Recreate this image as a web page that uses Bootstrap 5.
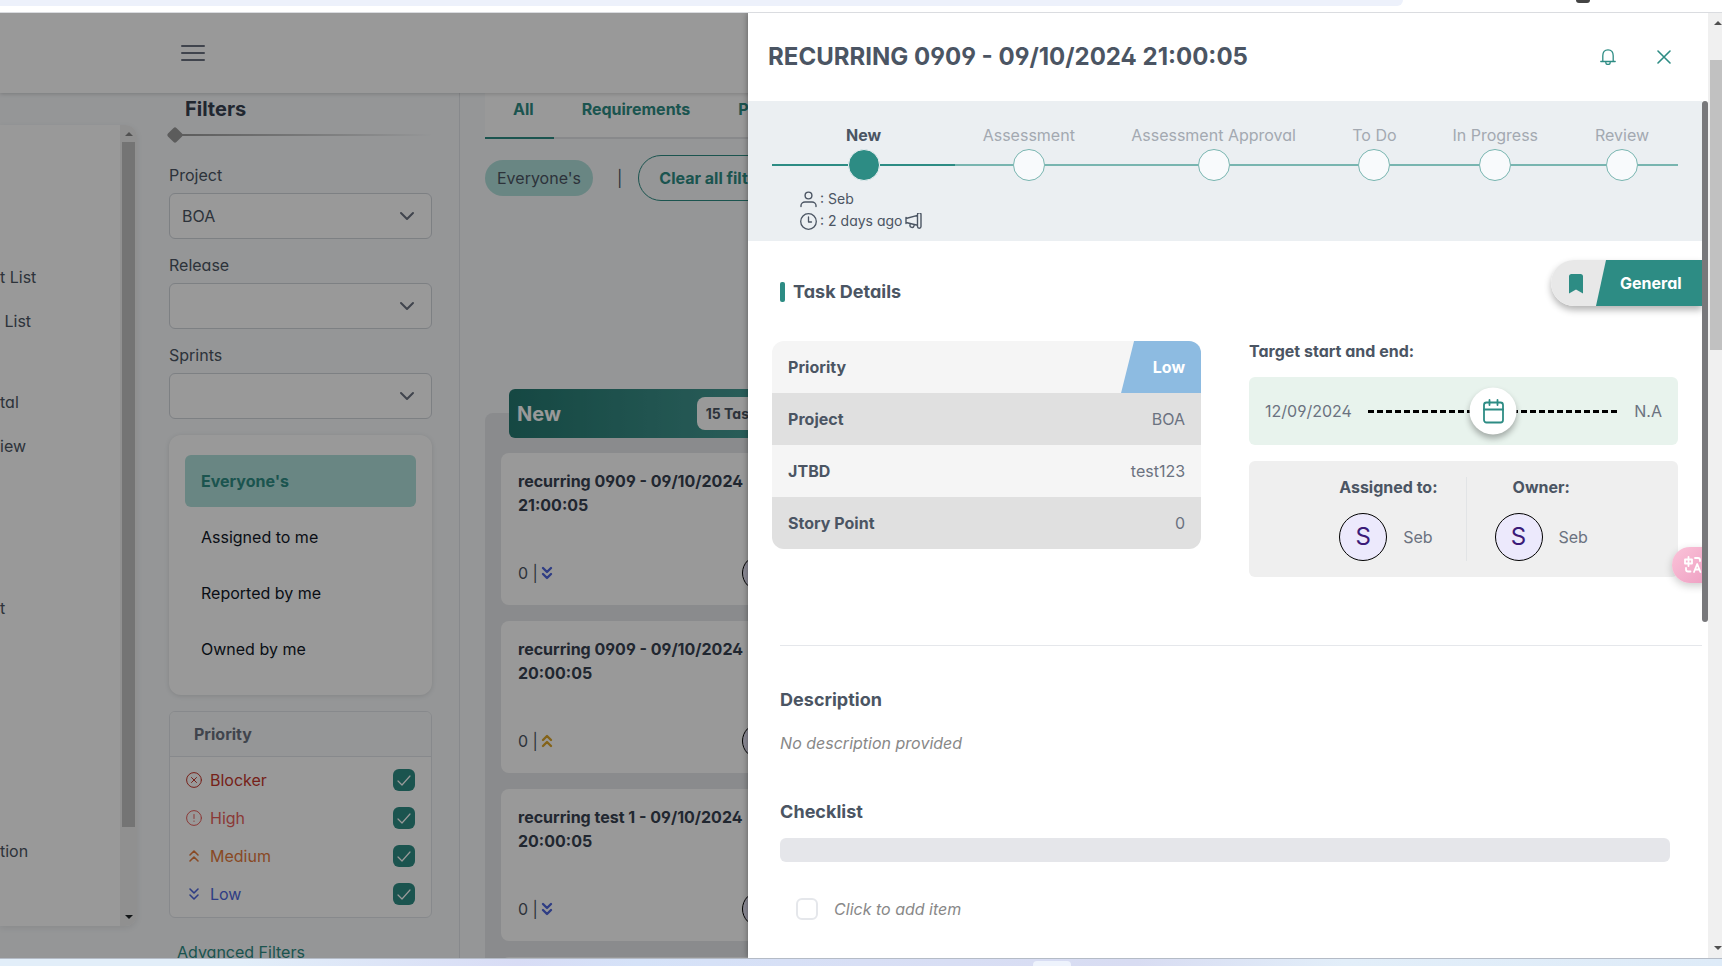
<!DOCTYPE html>
<html lang="en">
<head>
<meta charset="utf-8">
<meta name="viewport" content="width=device-width, initial-scale=1">
<title>Recurring 0909</title>
<link rel="stylesheet" href="https://cdn.jsdelivr.net/npm/bootstrap@5.3.0/dist/css/bootstrap.min.css">
<style>
:root { --teal:#2d8c84; --ink:#4b5563; --ink-soft:#6b7280; --edge:#d1d5db; }
body { font-family:Inter,"Noto Sans",sans-serif; font-feature-settings:"cv02","cv03","cv04","cv11"; font-size:16px; line-height:24px; color:var(--ink); background:#fff; }
a { text-decoration:none; color:inherit; }
svg { display:block; flex:none; fill:none; stroke:currentColor; stroke-linecap:round; stroke-linejoin:round; }

/* browser edges */
.chrome-top { flex:none; height:13px; border-bottom:1px solid #dadce0; }
.omnibox { width:81.5%; height:6px; background:#edf1fb; border-bottom-right-radius:16px; }
.chrome-icon { width:14px; height:3px; background:#444; border-radius:0 0 4px 4px; margin-left:173px; }
.chrome-bottom { flex:none; height:8px; border-top:1px solid #b4bbc6; background:linear-gradient(90deg,#e2eef9 0%,#e2eef9 14%,#d8dcf5 30%,#d5e2f8 37%,#d8dff5 50%,#d8dcf2 66%,#e2eef9 78%,#deebf8 100%); }
.taskbar-chip { width:38px; height:5px; background:#eef3fc; border-radius:4px 4px 0 0; margin-left:60%; }

/* page scrollbar */
.page-scroll { width:14px; background:#f0f0f0; padding:8px 0 8px 2px; color:#505050; }
.page-scroll .thumb { height:290px; background:#c1c1c1; margin-top:35px; }
.arrow { flex:none; width:0; height:0; border:4px solid transparent; border-top:0; border-bottom:4px solid currentColor; }
.arrow.down { border-top:4px solid currentColor; border-bottom:0; }

/* application page */
.app-page { background:#f8fafc; }
.app-bar { height:80px; background:#fff; padding-left:181px; box-shadow:0 1px 4px rgba(0,0,0,.18); z-index:1; }
.app-bar .btn { color:var(--ink-soft); }
.side-nav { width:137px; height:801px; margin-top:32px; background:#fff; border-radius:0 12px 12px 0; box-shadow:0 2px 6px rgba(0,0,0,.08); overflow:hidden; }
.side-nav a { display:block; height:44px; line-height:44px; white-space:pre; }
.side-nav .links { padding-top:130px; }
.side-nav .track { width:17px; background:#f0f0f0; color:#888; padding:7px 0; }
.side-nav .thumb { width:13px; height:685px; background:#c1c1c1; margin-top:6px; }
.sp-1 { margin-top:37px; } .sp-2 { margin-top:118px; } .sp-3 { margin-top:199px; }
.filters { width:323px; padding:0 27px 0 32px; border-right:1px solid #e2e5e9; }
.filters h2 { font-size:20px; line-height:32px; font-weight:700; color:#374151; margin:0 0 0 16px; }
.rule { height:16px; margin:2px 0 20px; }
.rule i { width:12px; height:12px; border-radius:2px; background:#9a9a9a; transform:rotate(45deg); }
.rule span { height:2px; background:linear-gradient(90deg,#9a9a9a,#f8fafc); }
.filters .form-label { display:block; margin:0 0 6px; }
.filters .form-select { height:46px; border:1px solid var(--edge); border-radius:6px; padding:0 12px; color:var(--ink); margin-bottom:14px; background:#fff url("data:image/svg+xml,%3Csvg xmlns='http://www.w3.org/2000/svg' viewBox='0 0 16 10'%3E%3Cpath d='M2 2l6 6 6-6' fill='none' stroke='%236b7280' stroke-width='2' stroke-linecap='round' stroke-linejoin='round'/%3E%3C/svg%3E") no-repeat right 16px center/16px 10px; }
.people { background:#fff; border-radius:12px; padding:20px 16px; height:260px; margin-top:16px; box-shadow:0 1px 5px rgba(0,0,0,.12); }
.people button { height:52px; border:0; border-radius:6px; padding:0 16px; text-align:left; background:none; color:#111827; }
.people button.on { background:#b0dfda; color:var(--teal); font-weight:700; }
.prio { border:1px solid #e2e5ea; border-radius:6px; margin-top:16px; overflow:hidden; background:#fff; }
.prio h3 { font-size:16px; line-height:44px; font-weight:700; color:var(--ink-soft); margin:0; padding-left:24px; background:#f8fafc; border-bottom:1px solid #e2e5ea; }
.prio label { height:38px; padding:0 16px; }
.prio .form-check-input { width:22px; height:22px; border-radius:6px; margin:0; border:0; background:var(--teal) url("data:image/svg+xml,%3Csvg xmlns='http://www.w3.org/2000/svg' viewBox='0 0 22 22'%3E%3Cpath d='M5 12l4 4 8-9' fill='none' stroke='%23fff' stroke-width='1.2' stroke-linecap='round' stroke-linejoin='round'/%3E%3C/svg%3E") center/22px 22px no-repeat; }
.p-blocker { color:#c5372c; } .p-high { color:#e85f5c; } .p-medium { color:#e57a3c; } .p-low { color:#4f67dd; } .p-mid { color:#dca62a; }
.adv { color:var(--teal); margin:22px 0 0 8px; }

.board { padding-left:25px; min-width:0; }
.tabs { height:46px; background:#fff; border-bottom:2px solid #e3e5e8; font-weight:700; color:var(--teal); }
.tabs a { height:46px; padding:4px 20px 0 28px; border-bottom:2px solid transparent; }
.tabs a.on { border-color:var(--teal); }
.chips { margin-top:16px; }
.chip-tag { background:#b0dfda; border-radius:18px; height:36px; line-height:36px; padding:0 12px; }
.clear-btn { height:46px; border:1px solid var(--teal); border-radius:23px; background:none; color:var(--teal); font-weight:700; padding:0 20px; }
.lane { display:flow-root; width:326px; background:#e6e8eb; border-radius:8px; margin-top:212px; padding:0 16px; height:600px; }
.lane-head { height:49px; margin:-24px 8px 15px; background:linear-gradient(90deg,#247870,#4aa09a); border-radius:6px; padding:0 13px 0 8px; color:#fff; font-size:20px; font-weight:700; }
.lane-head span { height:33px; line-height:33px; border-radius:8px; background:#fff; color:var(--ink); font-size:14px; padding:0 9px; }
.task { background:#fff; border-radius:8px; height:152px; padding:16px 17px 14px; margin-bottom:16px; }
.task h4 { font-size:16px; line-height:24px; font-weight:700; color:#374151; margin:0; }
.ava { width:36px; height:36px; border:1px solid #000; border-radius:50%; background:#ece9fc; color:#3b1a78; line-height:34px; text-align:center; }
.dim { background:rgba(0,0,0,.4); z-index:2; }

/* task drawer */
.drawer { width:56.2%; background:#fff; z-index:3; box-shadow:0 0 6px rgba(0,0,0,.4); overflow:hidden; }
.drawer-head { height:88px; padding:0 37px 0 20px; gap:41px; color:var(--teal); }
.drawer-head h1 { font-size:24px; line-height:32px; font-weight:700; color:var(--ink); margin:0; }
.drawer-head button { border:0; background:none; padding:0; color:var(--teal); }
.drawer-body { padding-right:6px; }
.thumb-in { right:0; top:88px; width:6px; height:521px; border-radius:3px; background:#78787b; z-index:6; }
.steps { background:#ebeff2; height:140px; padding:22px 24px 0; }
.steps ol { display:grid; grid-template-columns:183fr 148fr 222fr 100fr 142fr 112fr; list-style:none; margin:0; padding:0; }
.steps li { text-align:center; color:#a3a9b1; white-space:nowrap; }
.steps li.on { color:var(--ink); font-weight:700; }
.node { margin-top:2px; }
.node::before, .node::after { content:""; flex:1; height:2px; background:#78b5b0; }
.node i { width:32px; height:32px; border:1px solid #78b5b0; border-radius:50%; background:#f8fafc; }
.on .node::before, .on .node::after { background:var(--teal); }
.on .node i { border-color:#ebeff2; background:var(--teal); }
.stepinfo { margin:7px 0 0 28px; font-size:14px; line-height:22px; gap:3px; }
.title-row { padding:19px 0 0 32px; height:100px; }
.title-row h2, .sect { font-size:18px; line-height:24px; font-weight:700; margin:0; }
.title-row h2 { margin-top:20px; gap:8px; }
.title-row h2::before { content:""; width:5px; height:20px; border-radius:2px; background:var(--teal); }
.ribbon { width:151px; height:46px; border-radius:23px 0 0 23px; background:#e8e8e8; overflow:hidden; color:var(--teal); padding-left:18px; }
.ribbon svg { margin-top:2px; }
.ribbon-box { border-radius:23px 0 0 23px; box-shadow:0 4px 7px rgba(0,0,0,.3); height:46px; }
.ribbon b { height:46px; line-height:46px; width:106px; padding-left:24px; background:var(--teal); color:#fff; font-weight:700; clip-path:polygon(10px 0,100% 0,100% 100%,0 100%); }
.facts { padding:0 24px; gap:48px; }
.facts > div { flex:1 1 0; }
.facts table { width:100%; border-radius:12px; overflow:hidden; border-collapse:collapse; }
.facts tr { height:52px; background:#f5f5f5; }
.facts tr:nth-child(even) { background:#e0e0e0; }
.facts th { padding:0 16px; font-weight:700; }
.facts td { padding:0 16px 0 0; text-align:right; color:var(--ink-soft); }
.facts td.lowcell { padding:0; }
.lowtag { display:inline-block; height:52px; line-height:52px; width:80px; padding-right:16px; background:#8dbbe1; color:#fff; font-weight:700; clip-path:polygon(13px 0,100% 0,100% 100%,0 100%); vertical-align:top; }
.span-label { font-weight:700; line-height:20px; }
.dates { background:#e8f3ed; height:68px; border-radius:6px; padding:0 16px; margin:16px 0; gap:16px; color:var(--ink-soft); }
.dash { height:3px; background:repeating-linear-gradient(90deg,#000 0 6px,transparent 6px 9px); }
.cal { width:47px; height:47px; border-radius:50%; background:#fff; color:var(--teal); left:50%; top:50%; transform:translate(-50%,-50%); box-shadow:0 4px 6px rgba(0,0,0,.3); }
.crew { background:#efefef; height:116px; border-radius:6px; padding:16px; color:var(--ink-soft); }
.crew > div { padding:0 28px; }
.crew > div:first-child { border-right:1px solid #e2e4e6; }
.crew h3 { font-size:16px; line-height:20px; font-weight:700; margin:0 0 16px; color:var(--ink); }
.crew .ava { width:48px; height:48px; line-height:46px; font-size:24px; }
.transl { right:0; top:534px; width:36px; height:36px; border-radius:18px 0 0 18px; background:linear-gradient(135deg,#fbc3d9,#ee9fc2); box-shadow:0 3px 8px rgba(0,0,0,.2); color:#fff; z-index:5; border:0; padding:0 0 0 12px; }
.lower { margin-left:32px; border-top:1px solid #e5e7eb; margin-top:68px; padding-top:42px; }
.lower em { color:#888; }
.sect + p { margin:19px 0 45px; }
.bar { height:24px; border-radius:6px; background:#e5e6ea; margin:14px 32px 35px 0; }
.lower .form-check-input { width:22px; height:22px; border:2px solid #e5e7eb; border-radius:6px; margin:0; }
</style>
</head>
<body>
<div class="vh-100 d-flex flex-column overflow-hidden">
  <div class="chrome-top d-flex"><div class="omnibox flex-shrink-0"></div><div class="chrome-icon flex-shrink-0"></div></div>

  <div class="d-flex flex-grow-1" style="min-height:0">
    <div class="flex-grow-1 position-relative overflow-hidden">
      <div class="app-page h-100 overflow-hidden d-flex flex-column">
        <header class="app-bar d-flex align-items-center flex-shrink-0 position-relative">
          <button class="btn p-0 border-0" aria-label="Menu"><svg width="24" height="18" viewBox="0 0 24 18" stroke-width="2"><path d="M1 2h22M1 9h22M1 16h22"/></svg></button>
        </header>
        <div class="d-flex">
          <nav class="side-nav d-flex flex-shrink-0">
            <div class="links flex-grow-1"><a href="#">t List</a><a href="#"> List</a><a href="#" class="sp-1">tal</a><a href="#">iew</a><a href="#" class="sp-2">t</a><a href="#" class="sp-3">tion</a></div>
            <div class="track d-flex flex-column align-items-center"><i class="arrow"></i><div class="thumb"></div><i class="arrow down mt-auto text-dark"></i></div>
          </nav>
          <aside class="filters flex-shrink-0">
            <h2>Filters</h2>
            <div class="rule d-flex align-items-center"><i></i><span class="flex-grow-1"></span></div>
            <label class="form-label" for="f1">Project</label><select class="form-select" id="f1"><option>BOA</option></select>
            <label class="form-label" for="f2">Release</label><select class="form-select" id="f2"><option></option></select>
            <label class="form-label" for="f3">Sprints</label><select class="form-select" id="f3"><option></option></select>
            <div class="people d-flex flex-column gap-1"><button class="on">Everyone's</button><button>Assigned to me</button><button>Reported by me</button><button>Owned by me</button></div>
            <section class="prio"><h3>Priority</h3><div class="py-1">
              <label class="p-blocker d-flex align-items-center gap-2"><svg width="16" height="16" viewBox="0 0 16 16"><circle cx="8" cy="8" r="7.4"/><path d="M5.5 5.5l5 5M10.5 5.5l-5 5"/></svg>Blocker<input type="checkbox" class="form-check-input ms-auto" checked></label>
              <label class="p-high d-flex align-items-center gap-2"><svg width="16" height="16" viewBox="0 0 16 16"><circle cx="8" cy="8" r="7.4"/><path d="M8 4.5v4M8 11v.4"/></svg>High<input type="checkbox" class="form-check-input ms-auto" checked></label>
              <label class="p-medium d-flex align-items-center gap-2"><svg width="16" height="16" viewBox="0 0 16 16" stroke-width="1.6"><path d="M4 7l4-4 4 4M4 13l4-4 4 4"/></svg>Medium<input type="checkbox" class="form-check-input ms-auto" checked></label>
              <label class="p-low d-flex align-items-center gap-2"><svg width="16" height="16" viewBox="0 0 16 16" stroke-width="1.6"><path d="M4 3l4 4 4-4M4 9l4 4 4-4"/></svg>Low<input type="checkbox" class="form-check-input ms-auto" checked></label>
            </div></section>
            <a href="#" class="adv d-block">Advanced Filters</a>
          </aside>
          <main class="board flex-grow-1">
            <nav class="tabs d-flex"><a href="#" class="on">All</a><a href="#">Requirements</a><a href="#">Planning</a></nav>
            <div class="chips d-flex align-items-center"><span class="chip-tag">Everyone's</span><span class="ms-4 me-3">|</span><button class="clear-btn">Clear all filters</button></div>
            <section class="lane">
              <div class="lane-head d-flex align-items-center justify-content-between">New<span>15 Tasks</span></div>
              <article class="task d-flex flex-column justify-content-between"><h4>recurring 0909 - 09/10/2024 21:00:05</h4><div class="d-flex align-items-center">0 |<svg class="p-low" width="18" height="16" viewBox="0 0 18 16" stroke-width="2.4"><path d="M5 3l4 4 4-4M5 9l4 4 4-4"/></svg><span class="ava ms-auto">S</span></div></article>
              <article class="task d-flex flex-column justify-content-between"><h4>recurring 0909 - 09/10/2024 20:00:05</h4><div class="d-flex align-items-center">0 |<svg class="p-mid" width="18" height="16" viewBox="0 0 18 16" stroke-width="2.4"><path d="M5 7l4-4 4 4M5 13l4-4 4 4"/></svg><span class="ava ms-auto">S</span></div></article>
              <article class="task d-flex flex-column justify-content-between"><h4>recurring test 1 - 09/10/2024 20:00:05</h4><div class="d-flex align-items-center">0 |<svg class="p-low" width="18" height="16" viewBox="0 0 18 16" stroke-width="2.4"><path d="M5 3l4 4 4-4M5 9l4 4 4-4"/></svg><span class="ava ms-auto">S</span></div></article>
              <article class="task"></article>
            </section>
          </main>
        </div>
      </div>
      <div class="dim position-absolute top-0 start-0 w-100 h-100"></div>

      <section class="drawer position-absolute top-0 end-0 h-100">
        <header class="drawer-head d-flex align-items-center">
          <h1 class="me-auto">RECURRING 0909 - 09/10/2024 21:00:05</h1>
          <button aria-label="Notifications"><svg width="16" height="16" viewBox="0 0 16 16" stroke-width="1.3"><path d="M.8 12.5h14.400M2.800 12.500V6.800C2.800 3 4.500.8 8 .8s5.200 2.200 5.200 6v5.700M5.800 13.500a2.200 2 0 0 0 4.400 0"/></svg></button>
          <button aria-label="Close"><svg width="14" height="14" viewBox="0 0 14 14" stroke-width="1.600"><path d="M1 1l12 12M13 1L1 13"/></svg></button>
        </header>
        <div class="drawer-body">
          <div class="steps">
            <ol>
              <li class="on">New<div class="node d-flex align-items-center"><i></i></div></li>
              <li>Assessment<div class="node d-flex align-items-center"><i></i></div></li>
              <li>Assessment Approval<div class="node d-flex align-items-center"><i></i></div></li>
              <li>To Do<div class="node d-flex align-items-center"><i></i></div></li>
              <li>In Progress<div class="node d-flex align-items-center"><i></i></div></li>
              <li>Review<div class="node d-flex align-items-center"><i></i></div></li>
            </ol>
            <div class="stepinfo d-flex align-items-center"><svg width="17" height="17" viewBox="0 0 17 17" stroke-width="1.400"><circle cx="8.500" cy="4.500" r="3.400"/><path d="M1 15.500v-1C1 12.300 3 11 5 11h7c2 0 4 1.300 4 3.500v1"/></svg>: Seb</div>
            <div class="stepinfo mt-0 d-flex align-items-center"><svg width="17" height="17" viewBox="0 0 17 17" stroke-width="1.300"><circle cx="8.500" cy="8.500" r="7.800"/><path d="M8.500 4v5h3"/></svg>: 2 days ago<svg width="17" height="16" viewBox="0 0 17 16" stroke-width="1.400"><path d="M1 4.500v6M1 5.500l11.500-3.200M1 9.500l11.500 2.800M12.500 1.500a1.500 1.500 0 0 1 3.500 0v12a1.500 1.500 0 0 1-3.500 0zM5 10.700v1.300a2 2 0 0 0 4 .8v-1.200"/></svg></div>
          </div>
          <div class="title-row d-flex justify-content-between">
            <h2 class="d-flex align-items-center align-self-start">Task Details</h2>
            <div class="ribbon-box"><div class="ribbon d-flex align-items-center justify-content-between"><svg width="14" height="20" viewBox="0 0 14 20"><path fill="currentColor" stroke="none" d="M2.500 0h9A2.500 2.500 0 0 1 14 2.500V19.500L7 15.500 0 19.500V2.500A2.500 2.500 0 0 1 2.500 0z"/></svg><b class="flex-shrink-0">General</b></div></div>
          </div>
          <div class="facts d-flex">
            <div>
              <table>
                <tr><th>Priority</th><td class="lowcell"><span class="lowtag">Low</span></td></tr>
                <tr><th>Project</th><td>BOA</td></tr>
                <tr><th>JTBD</th><td>test123</td></tr>
                <tr><th>Story Point</th><td>0</td></tr>
              </table>
            </div>
            <div>
              <div class="span-label">Target start and end:</div>
              <div class="dates d-flex align-items-center">12/09/2024<div class="flex-grow-1 position-relative"><div class="dash"></div><span class="cal position-absolute d-flex align-items-center justify-content-center"><svg width="22" height="26" viewBox="0 0 22 26" stroke-width="1.800"><rect x="1.500" y="4" width="19" height="20" rx="2.500"/><path d="M1.500 11h19M7 1.500v5M15 1.500v5"/></svg></span></div>N.A</div>
              <div class="crew d-flex justify-content-center">
                <div><h3>Assigned to:</h3><div class="d-flex align-items-center gap-3"><span class="ava">S</span>Seb</div></div>
                <div><h3 class="text-center">Owner:</h3><div class="d-flex align-items-center gap-3"><span class="ava">S</span>Seb</div></div>
              </div>
            </div>
          </div>
          <div class="lower">
            <h3 class="sect">Description</h3>
            <p><em>No description provided</em></p>
            <h3 class="sect">Checklist</h3>
            <div class="bar"></div>
            <label class="d-flex align-items-center gap-3 ms-3"><input type="checkbox" class="form-check-input"><em>Click to add item</em></label>
          </div>
        </div>
        <button class="transl position-absolute" aria-label="Translate"><svg width="18" height="18" viewBox="0 0 18 18" stroke-width="1.800"><path d="M1 3.500h7v4H1zM4.500 1v9M11 2h3a2 2 0 0 1 2 2v1M2 12v1.500a2 2 0 0 0 2 2h2.500M10 16l3.200-8 3.200 8M11 13.500h4.500"/></svg></button>
        <div class="thumb-in position-absolute"></div>
      </section>
    </div>
    <div class="page-scroll d-flex flex-column flex-shrink-0"><i class="arrow ms-1"></i><div class="thumb"></div><i class="arrow down mt-auto ms-1"></i></div>
  </div>
  <div class="chrome-bottom d-flex align-items-end"><div class="taskbar-chip"></div></div>
</div>
<script src="https://cdn.jsdelivr.net/npm/bootstrap@5.3.0/dist/js/bootstrap.bundle.min.js"></script>
</body>
</html>
